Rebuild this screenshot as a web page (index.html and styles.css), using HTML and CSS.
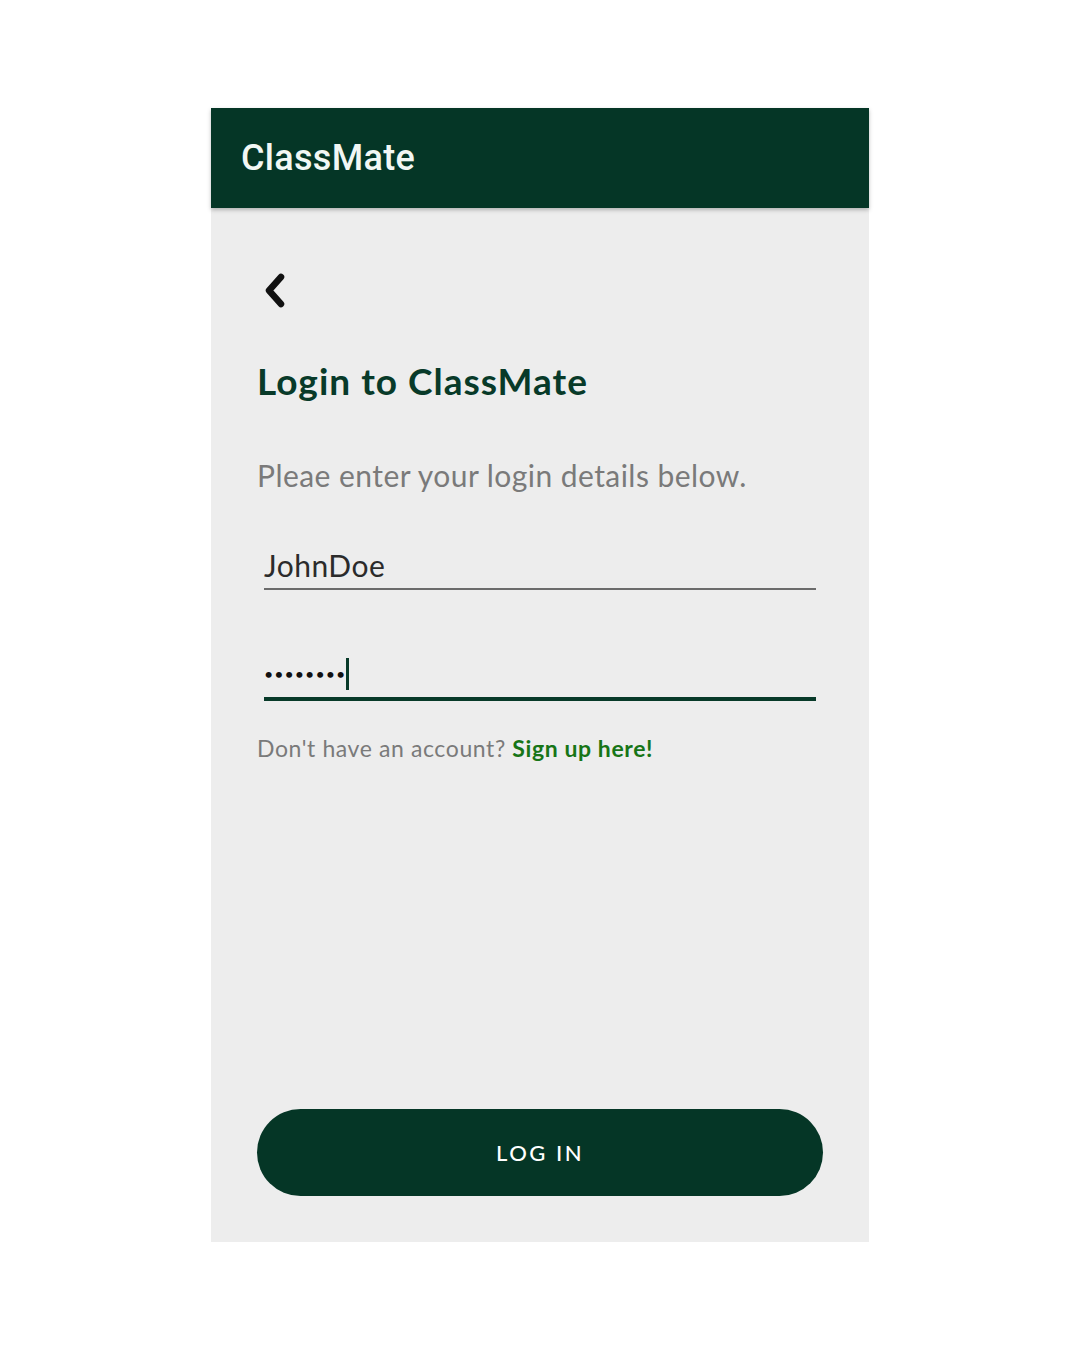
FILE: index.html
```html
<!DOCTYPE html>
<html lang="en">
<head>
<meta charset="utf-8">
<title>ClassMate – Login</title>
<link rel="stylesheet" href="styles.css">
</head>
<body>
<div class="phone">
  <header class="appbar">
    <h1 class="appbar-title">ClassMate</h1>
  </header>
  <main class="content">
    <button class="back" aria-label="Back">
      <svg width="30" height="40" viewBox="0 0 30 40"><polyline points="19,6 7,19.5 19,33" fill="none" stroke="#111" stroke-width="6.5" stroke-linecap="round" stroke-linejoin="round"/></svg>
    </button>
    <h2 class="title">Login to ClassMate</h2>
    <p class="subtitle">Pleae enter your login details below.</p>
    <div class="field">
      <span class="field-value">JohnDoe</span>
    </div>
    <div class="field field-active">
      <span class="field-value dots">••••••••</span><span class="caret"></span>
    </div>
    <p class="signup">Don't have an account? <a class="signup-link" href="#">Sign up here!</a></p>
    <button class="login-btn">LOG IN</button>
  </main>
</div>
</body>
</html>
```
FILE: styles.css
```css
html, body {
  margin: 0;
  padding: 0;
  background: #ffffff;
}
body {
  font-family: Lato, "Open Sans", sans-serif;
}
.phone {
  width: 658px;
  height: 1134px;
  margin: 108px auto 0;
  background: #ededed;
  display: flex;
  flex-direction: column;
}
.appbar {
  height: 100px;
  background: #053626;
  display: flex;
  align-items: center;
  padding-left: 30px;
  box-shadow: 0 2px 4px rgba(0,0,0,0.25);
  position: relative;
  z-index: 1;
}
.appbar-title {
  margin: 0;
  font-family: Roboto, sans-serif;
  font-weight: 500;
  font-size: 36px;
  color: #f2f7f4;
  letter-spacing: 0.3px;
}
.content {
  flex: 1;
  display: flex;
  flex-direction: column;
  padding: 0 46px 46px;
}
.back {
  margin: 63px 0 0 5px;
  padding: 0;
  border: 0;
  background: none;
  width: 30px;
  height: 40px;
  align-self: flex-start;
}
.back svg { display: block; }
.title {
  margin: 48px 0 0;
  font-size: 37px;
  line-height: 44px;
  font-weight: 700;
  color: #083a29;
  letter-spacing: 1px;
}
.subtitle {
  margin: 54px 0 0;
  font-size: 30px;
  line-height: 36px;
  font-weight: 400;
  color: #7a7a7a;
  letter-spacing: 0.45px;
}
.field {
  margin: 48px 7px 0;
  border-bottom: 2px solid #6b6b6b;
  height: 47px;
  display: flex;
  align-items: center;
}
.field-value {
  font-size: 30px;
  color: #2b2b2b;
  letter-spacing: 0.5px;
}
.field-active {
  margin-top: 60px;
  border-bottom: 4px solid #083a29;
}
.dots {
  font-size: 16px;
  letter-spacing: 1px;
  color: #111;
}
.caret {
  display: inline-block;
  width: 3px;
  height: 32px;
  background: #083a29;
  margin-left: 0;
}
.signup {
  margin: 33px 0 0;
  font-size: 23px;
  line-height: 28px;
  color: #7a7a7a;
  letter-spacing: 0.6px;
}
.signup-link {
  color: #177517;
  font-weight: 700;
  text-decoration: none;
}
.login-btn {
  margin-top: auto;
  height: 87px;
  border: 0;
  border-radius: 44px;
  background: #053626;
  color: #ffffff;
  font-family: Lato, sans-serif;
  font-size: 22px;
  font-weight: 500;
  letter-spacing: 2.5px;
}
```
